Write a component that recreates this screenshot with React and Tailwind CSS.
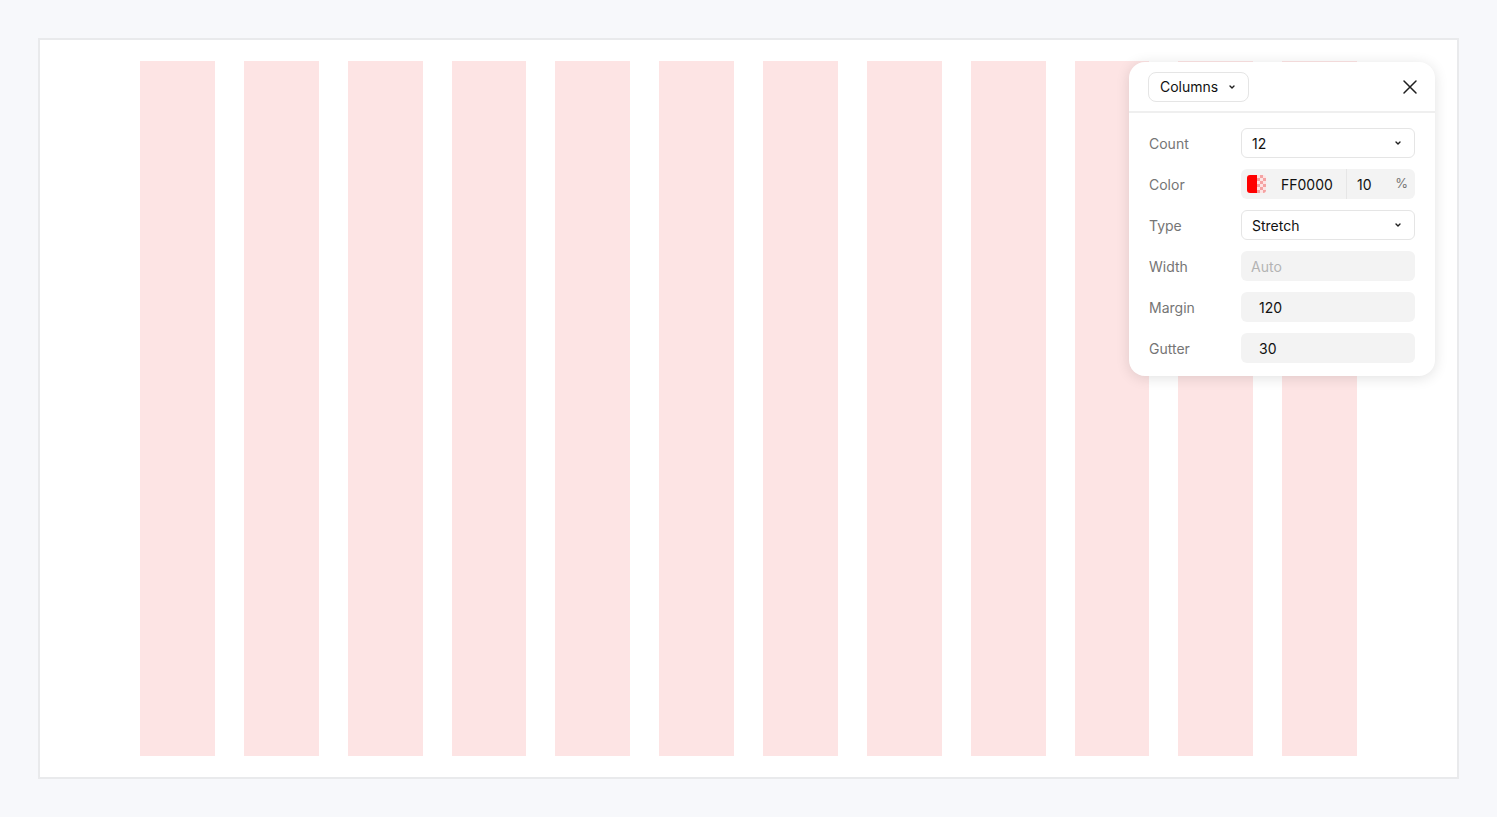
import React from 'react'

const COLS = Array.from({ length: 12 }, (_, i) => i)

const Chevron = ({ className = '' }) => (
  <svg className={className} width="10" height="10" viewBox="0 0 10 10" fill="none">
    <path d="M3 4l2 2 2-2" stroke="#1f1f1f" strokeWidth="1.4" strokeLinecap="round" strokeLinejoin="round" />
  </svg>
)

const Row = ({ label, children }) => (
  <div className="flex items-center h-[30px]">
    <span className="w-[92px] text-[14px] text-[#757575]">{label}</span>
    <div className="flex-1">{children}</div>
  </div>
)

const Select = ({ value }) => (
  <div className="flex items-center justify-between h-[30px] rounded-[6px] border border-[#e5e5e5] bg-white pl-[10px] pr-[11px] text-[14px] text-[#111]">
    <span>{value}</span>
    <Chevron />
  </div>
)

const Field = ({ value, muted }) => (
  <div className={`flex items-center h-[30px] rounded-[6px] bg-[#f3f3f3] px-[10px] text-[14px] ${muted ? 'text-[#b3b3b3]' : 'text-[#111] pl-[18px]'}`}>
    {value}
  </div>
)

export default function App() {
  return (
    <div className="min-h-screen w-full bg-[#f7f8fb] p-[38px]" style={{ fontFamily: 'Inter, "Noto Sans", sans-serif' }}>
      <div className="relative h-[741px] border-2 border-[#e9eaec] bg-white px-[100px] pt-[21px] pb-[21px]">
        <div className="grid grid-cols-12 gap-[29px] h-full">
          {COLS.map((i) => (
            <div key={i} className="bg-[#fde4e4]" />
          ))}
        </div>

        <div className="absolute left-[1089px] top-[22px] w-[306px] rounded-[16px] bg-white shadow-[0_2px_14px_rgba(0,0,0,0.12)]">
          <div className="flex items-center justify-between h-[51px] px-[19px] border-b-2 border-[#efefef]">
            <div className="flex items-center gap-[9px] h-[30px] rounded-[8px] border border-[#e5e5e5] px-[11px] text-[14px] text-[#111]">
              <span>Columns</span>
              <Chevron />
            </div>
            <svg width="16" height="16" viewBox="0 0 16 16" fill="none" className="mr-[-2px]">
              <path d="M2 2l12 12M14 2L2 14" stroke="#1f1f1f" strokeWidth="1.5" strokeLinecap="round" />
            </svg>
          </div>

          <div className="flex flex-col gap-[11px] px-[20px] pt-[15px] pb-[13px]">
            <Row label="Count"><Select value="12" /></Row>
            <Row label="Color">
              <div className="flex items-center h-[30px] rounded-[6px] bg-[#f3f3f3] text-[14px] text-[#111]">
                <div className="flex items-center flex-1 pl-[6px] gap-[15px]">
                  <div className="flex h-[18px] w-[19px] overflow-hidden rounded-[3px]">
                    <div className="w-[10px] bg-[#ff0000]" />
                    <div
                      className="w-[9px]"
                      style={{
                        backgroundColor: '#fde4e4',
                        backgroundImage:
                          'linear-gradient(45deg, #f4a3a3 25%, transparent 25%, transparent 75%, #f4a3a3 75%), linear-gradient(45deg, #f4a3a3 25%, transparent 25%, transparent 75%, #f4a3a3 75%)',
                        backgroundSize: '6px 6px',
                        backgroundPosition: '0 0, 3px 3px',
                      }}
                    />
                  </div>
                  <span>FF0000</span>
                </div>
                <div className="flex items-center justify-between w-[69px] h-full border-l border-[#e6e6e6] pl-[10px] pr-[7px]">
                  <span>10</span>
                  <span className="text-[#757575] text-[13px]">%</span>
                </div>
              </div>
            </Row>
            <Row label="Type"><Select value="Stretch" /></Row>
            <Row label="Width"><Field value="Auto" muted /></Row>
            <Row label="Margin"><Field value="120" /></Row>
            <Row label="Gutter"><Field value="30" /></Row>
          </div>
        </div>
      </div>
    </div>
  )
}
